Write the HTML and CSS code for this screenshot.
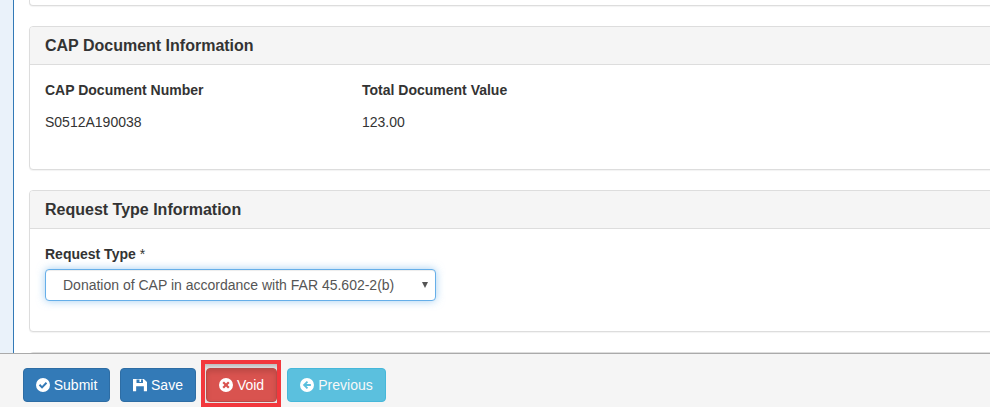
FILE: index.html
```html
<!DOCTYPE html>
<html lang="en">
<head>
<meta charset="utf-8">
<title>CAP Request</title>
<link rel="stylesheet" href="styles.css">
</head>
<body>
<div class="page">
  <div class="layout">
    <aside class="rail"></aside>
    <main class="main">
      <section class="panel panel-cut"></section>
      <section class="panel panel-doc">
        <h2 class="panel-heading">CAP Document Information</h2>
        <div class="panel-body doc-grid">
          <div class="field">
            <div class="label">CAP Document Number</div>
            <div class="value">S0512A190038</div>
          </div>
          <div class="field">
            <div class="label">Total Document Value</div>
            <div class="value">123.00</div>
          </div>
        </div>
      </section>
      <section class="panel panel-req">
        <h2 class="panel-heading">Request Type Information</h2>
        <div class="panel-body">
          <div class="label label-req">Request Type <span class="req">*</span></div>
          <div class="select">
            <span>Donation of CAP in accordance with FAR 45.602-2(b)</span>
            <span class="caret"></span>
          </div>
        </div>
      </section>
      <section class="panel panel-next"></section>
    </main>
  </div>
  <footer class="footer">
    <button class="btn btn-primary btn-submit" type="button">
      <svg class="icon" viewBox="0 0 16 16"><path fill-rule="evenodd" d="M8 0a8 8 0 1 0 0 16A8 8 0 0 0 8 0zM6.9 12.2 3.2 8.5l1.6-1.6 2.1 2.1 4.3-4.3 1.6 1.6z"/></svg>
      Submit
    </button>
    <button class="btn btn-primary btn-save" type="button">
      <svg class="icon" viewBox="0 0 16 16"><path fill-rule="evenodd" d="M0 1h12.4L16 4.6V15H0zM4 1.6v4.2h7.4V1.6H9.2v3H7.4v-3zM3.6 9.4V15h8.8V9.4z"/></svg>
      Save
    </button>
    <span class="focus-box">
      <button class="btn btn-danger" type="button">
        <svg class="icon" viewBox="0 0 16 16"><path fill-rule="evenodd" d="M8 0a8 8 0 1 0 0 16A8 8 0 0 0 8 0zM5.7 3.9 8 6.2l2.3-2.3 1.8 1.8L9.8 8l2.3 2.3-1.8 1.8L8 9.8l-2.3 2.3-1.8-1.8L6.2 8 3.9 5.7z"/></svg>
        Void
      </button>
    </span>
    <button class="btn btn-info" type="button">
      <svg class="icon" viewBox="0 0 16 16"><path fill-rule="evenodd" d="M8 0a8 8 0 1 0 0 16A8 8 0 0 0 8 0zM7.8 3.4l1.5 1.5-1.9 1.9h5v2.4h-5l1.9 1.9-1.5 1.5L3.2 8z"/></svg>
      Previous
    </button>
  </footer>
</div>
</body>
</html>
```
FILE: styles.css
```css
* { box-sizing: border-box; }
html, body { margin: 0; height: 100%; }
body {
  font-family: "Liberation Sans", Arial, sans-serif;
  font-size: 14px;
  line-height: 20px;
  color: #333;
  background: #fff;
  overflow: hidden;
}
.page { display: flex; flex-direction: column; height: 407px; }
.layout { display: flex; height: 353px; overflow: hidden; }
.rail { flex: 0 0 13px; background: #eaf2fa; }
.main {
  flex: 1;
  min-width: 0;
  border-left: 1px solid #337ab7;
  padding-left: 15px;
  overflow: hidden;
}
.panel {
  width: 1000px;
  background: #fff;
  border: 1px solid #ddd;
  border-radius: 4px;
  box-shadow: 0 1px 1px rgba(0, 0, 0, .05);
  margin-bottom: 20px;
}
.panel-cut { height: 6px; border-top: 0; border-top-left-radius: 0; border-top-right-radius: 0; }
.panel-doc { height: 144px; }
.panel-req { height: 142px; }
.panel-next { height: 40px; margin-bottom: 0; }
.panel-heading {
  margin: 0;
  height: 38px;
  padding: 9px 15px;
  font-size: 16px;
  line-height: 20px;
  font-weight: 700;
  color: #333;
  background: #f5f5f5;
  border-bottom: 1px solid #ddd;
  border-radius: 3px 3px 0 0;
}
.panel-body { padding: 15px; }
.doc-grid { display: grid; grid-template-columns: 317px 1fr; }
.label { font-weight: 700; }
.value { margin-top: 12px; }
.label-req { margin-bottom: 5px; }
.req { font-weight: 400; }
.select {
  display: flex;
  align-items: center;
  justify-content: space-between;
  width: 391px;
  height: 32px;
  padding: 0 7px 0 17px;
  color: #555;
  background: #fff;
  border: 1px solid #66afe9;
  border-radius: 4px;
  box-shadow: inset 0 1px 1px rgba(0, 0, 0, .075), 0 0 8px rgba(102, 175, 233, .6);
}
.caret {
  width: 0;
  height: 0;
  border-left: 3px solid transparent;
  border-right: 3px solid transparent;
  border-top: 6px solid #555;
}
.footer {
  flex: 1;
  display: flex;
  align-items: flex-start;
  padding: 14px 0 0 23px;
  background: #f5f5f5;
  border-top: 1px solid #aaa;
}
.btn {
  display: inline-flex;
  align-items: center;
  justify-content: center;
  gap: 4px;
  height: 34px;
  padding: 0 12px;
  font: inherit;
  color: #fff;
  border: 1px solid transparent;
  border-radius: 4px;
}
.icon { width: 14px; height: 14px; fill: #fff; flex: none; }
.btn-primary { background: #337ab7; border-color: #2e6da4; }
.btn-submit { width: 87px; margin-right: 10px; }
.btn-save { width: 76px; margin-right: 5px; }
.btn-danger {
  width: 71px;
  background: #d9534f;
  border-color: #b94a46;
  box-shadow: inset 0 3px 5px rgba(0, 0, 0, .125);
}
.btn-info { width: 99px; background: #5bc0de; border-color: #46b8da; margin-left: 6px; color: #f8f8f8; }
.focus-box {
  display: flex;
  margin-top: -8px;
  border: 4px solid #f2383d;
  padding: 4px 0 0 1px;
  height: 47px;
  background: linear-gradient(#bdbdbd, #e4e4e4 5px, #e4e4e4);
}
```
